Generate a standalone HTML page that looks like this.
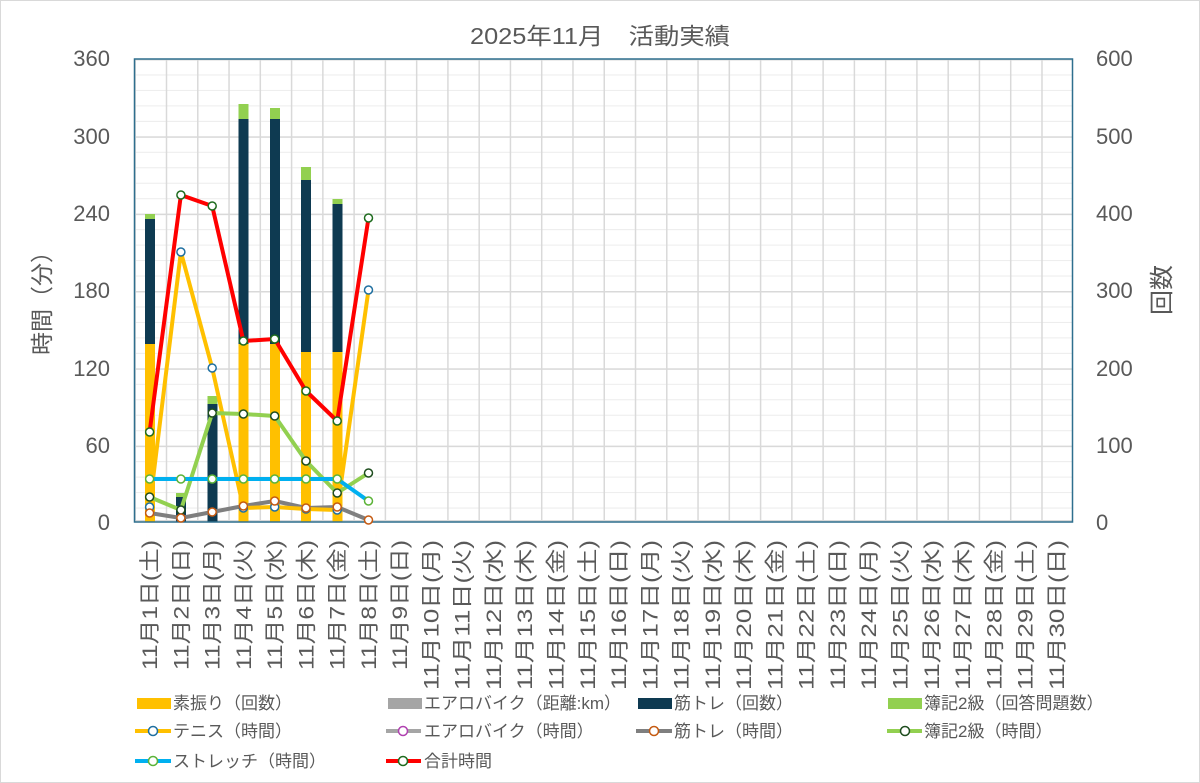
<!DOCTYPE html>
<html><head><meta charset="utf-8">
<style>
html,body{margin:0;padding:0;background:#fff;}
svg{display:block;}
text{font-family:"Liberation Sans","Noto Sans CJK JP",sans-serif;fill:#595959;}
</style></head>
<body>
<svg width="1200" height="783" viewBox="0 0 1200 783" xmlns="http://www.w3.org/2000/svg">
<defs>
<pattern id="minor" x="134.5" y="59" width="938" height="15.467" patternUnits="userSpaceOnUse">
<line x1="0" y1="0.5" x2="938" y2="0.5" stroke="#ececec" stroke-width="1"/>
</pattern>
<pattern id="major" x="134.5" y="59" width="938" height="77.333" patternUnits="userSpaceOnUse">
<line x1="0" y1="0.5" x2="938" y2="0.5" stroke="#d9d9d9" stroke-width="2"/>
</pattern>
<pattern id="vert" x="134.5" y="59" width="31.267" height="463" patternUnits="userSpaceOnUse">
<line x1="0.5" y1="0" x2="0.5" y2="463" stroke="#d9d9d9" stroke-width="2"/>
</pattern>
</defs>
<rect x="0.5" y="0.5" width="1199" height="782" fill="#fff" stroke="#d9d9d9"/>
<text x="470" y="44" font-size="23" textLength="260" lengthAdjust="spacingAndGlyphs">2025年11月　活動実績</text>

<rect x="134.5" y="59" width="938" height="463" fill="url(#minor)"/>
<rect x="134.5" y="59" width="938" height="463" fill="url(#major)"/>
<rect x="134.5" y="59" width="938" height="463" fill="url(#vert)"/>
<line x1="134.5" y1="521" x2="1072" y2="521" stroke="#d9d9d9" stroke-width="2"/>

<g>
<rect x="145" y="344" width="10" height="178" fill="#ffc000"/>
<rect x="145" y="219" width="10" height="125" fill="#0e3a51"/>
<rect x="145" y="214" width="10" height="5" fill="#92d050"/>
<rect x="176" y="497" width="10" height="25" fill="#0e3a51"/>
<rect x="176" y="493" width="10" height="4" fill="#92d050"/>
<rect x="207.5" y="404" width="10" height="118" fill="#0e3a51"/>
<rect x="207.5" y="396" width="10" height="8" fill="#92d050"/>
<rect x="238.5" y="344" width="10" height="178" fill="#ffc000"/>
<rect x="238.5" y="119" width="10" height="225" fill="#0e3a51"/>
<rect x="238.5" y="104" width="10" height="15" fill="#92d050"/>
<rect x="270" y="344" width="10" height="178" fill="#ffc000"/>
<rect x="270" y="119" width="10" height="225" fill="#0e3a51"/>
<rect x="270" y="108" width="10" height="11" fill="#92d050"/>
<rect x="301" y="352" width="10" height="170" fill="#ffc000"/>
<rect x="301" y="180" width="10" height="172" fill="#0e3a51"/>
<rect x="301" y="167" width="10" height="13" fill="#92d050"/>
<rect x="332.5" y="352" width="10" height="170" fill="#ffc000"/>
<rect x="332.5" y="204" width="10" height="148" fill="#0e3a51"/>
<rect x="332.5" y="199" width="10" height="5" fill="#92d050"/>
</g>

<rect x="134.5" y="59" width="938" height="463" fill="none" stroke="#2e6f8e" stroke-width="1.5"/>

<g fill="none" stroke-width="4" stroke-linejoin="round">
<polyline stroke="#7f7f7f" points="149.6,513 180.9,518 212.2,512 243.4,506 274.7,501 306,508 337.2,507 368.5,520"/>
<polyline stroke="#ffc000" points="149.6,507 180.9,252 212.2,368 243.4,508 274.7,507 306,509 337.2,510 368.5,290"/>
<polyline stroke="#92d050" points="149.6,497 180.9,510 212.2,413 243.4,414 274.7,416 306,461 337.2,493 368.5,473"/>
<polyline stroke="#00b0f0" points="149.6,479 180.9,479 212.2,479 243.4,479 274.7,479 306,479 337.2,479 368.5,501"/>
<polyline stroke="#ff0000" points="149.6,432 180.9,195 212.2,206 243.4,341 274.7,339 306,391 337.2,421 368.5,218"/>
</g>
<g fill="#fff" stroke-width="1.5">
<g stroke="#1f6fa0"><circle cx="149.6" cy="507" r="4"/><circle cx="180.9" cy="252" r="4"/><circle cx="212.2" cy="368" r="4"/><circle cx="243.4" cy="508" r="4"/><circle cx="274.7" cy="507" r="4"/><circle cx="306" cy="509" r="4"/><circle cx="337.2" cy="510" r="4"/><circle cx="368.5" cy="290" r="4"/></g>
<g stroke="#1e4d1e"><circle cx="149.6" cy="497" r="4"/><circle cx="180.9" cy="510" r="4"/><circle cx="212.2" cy="413" r="4"/><circle cx="243.4" cy="414" r="4"/><circle cx="274.7" cy="416" r="4"/><circle cx="306" cy="461" r="4"/><circle cx="337.2" cy="493" r="4"/><circle cx="368.5" cy="473" r="4"/></g>
<g stroke="#5cb338"><circle cx="149.6" cy="479" r="4"/><circle cx="180.9" cy="479" r="4"/><circle cx="212.2" cy="479" r="4"/><circle cx="243.4" cy="479" r="4"/><circle cx="274.7" cy="479" r="4"/><circle cx="306" cy="479" r="4"/><circle cx="337.2" cy="479" r="4"/><circle cx="368.5" cy="501" r="4"/></g>
<g stroke="#c55a11"><circle cx="149.6" cy="513" r="4"/><circle cx="180.9" cy="518" r="4"/><circle cx="212.2" cy="512" r="4"/><circle cx="243.4" cy="506" r="4"/><circle cx="274.7" cy="501" r="4"/><circle cx="306" cy="508" r="4"/><circle cx="337.2" cy="507" r="4"/><circle cx="368.5" cy="520" r="4"/></g>
<g stroke="#1e6b1e"><circle cx="149.6" cy="432" r="4"/><circle cx="180.9" cy="195" r="4"/><circle cx="212.2" cy="206" r="4"/><circle cx="243.4" cy="341" r="4"/><circle cx="274.7" cy="339" r="4"/><circle cx="306" cy="391" r="4"/><circle cx="337.2" cy="421" r="4"/><circle cx="368.5" cy="218" r="4"/></g>
</g>

<g font-size="22" text-anchor="end">
<text x="110" y="66">360</text><text x="110" y="144">300</text><text x="110" y="221">240</text>
<text x="110" y="298">180</text><text x="110" y="376">120</text><text x="110" y="453">60</text><text x="110" y="530">0</text>
</g>
<g font-size="22" text-anchor="start">
<text x="1096" y="66">600</text><text x="1096" y="144">500</text><text x="1096" y="221">400</text>
<text x="1096" y="298">300</text><text x="1096" y="376">200</text><text x="1096" y="453">100</text><text x="1096" y="530">0</text>
</g>
<text transform="translate(50,355) rotate(-90)" font-size="23" textLength="115" lengthAdjust="spacingAndGlyphs">時間（分）</text>
<text transform="translate(1170,315) rotate(-90)" font-size="24" textLength="50" lengthAdjust="spacingAndGlyphs">回数</text>

<g font-size="21" text-anchor="end" lengthAdjust="spacingAndGlyphs">
<text transform="translate(157,540) rotate(-90)" textLength="130" lengthAdjust="spacingAndGlyphs">11月1日(土)</text>
<text transform="translate(188.3,540) rotate(-90)" textLength="130" lengthAdjust="spacingAndGlyphs">11月2日(日)</text>
<text transform="translate(219.6,540) rotate(-90)" textLength="130" lengthAdjust="spacingAndGlyphs">11月3日(月)</text>
<text transform="translate(250.8,540) rotate(-90)" textLength="130" lengthAdjust="spacingAndGlyphs">11月4日(火)</text>
<text transform="translate(282.1,540) rotate(-90)" textLength="130" lengthAdjust="spacingAndGlyphs">11月5日(水)</text>
<text transform="translate(313.4,540) rotate(-90)" textLength="130" lengthAdjust="spacingAndGlyphs">11月6日(木)</text>
<text transform="translate(344.6,540) rotate(-90)" textLength="130" lengthAdjust="spacingAndGlyphs">11月7日(金)</text>
<text transform="translate(375.9,540) rotate(-90)" textLength="130" lengthAdjust="spacingAndGlyphs">11月8日(土)</text>
<text transform="translate(407.2,540) rotate(-90)" textLength="130" lengthAdjust="spacingAndGlyphs">11月9日(日)</text>
<text transform="translate(438.4,540) rotate(-90)" textLength="150" lengthAdjust="spacingAndGlyphs">11月10日(月)</text>
<text transform="translate(469.7,540) rotate(-90)" textLength="150" lengthAdjust="spacingAndGlyphs">11月11日(火)</text>
<text transform="translate(501,540) rotate(-90)" textLength="150" lengthAdjust="spacingAndGlyphs">11月12日(水)</text>
<text transform="translate(532.2,540) rotate(-90)" textLength="150" lengthAdjust="spacingAndGlyphs">11月13日(木)</text>
<text transform="translate(563.5,540) rotate(-90)" textLength="150" lengthAdjust="spacingAndGlyphs">11月14日(金)</text>
<text transform="translate(594.8,540) rotate(-90)" textLength="150" lengthAdjust="spacingAndGlyphs">11月15日(土)</text>
<text transform="translate(626.1,540) rotate(-90)" textLength="150" lengthAdjust="spacingAndGlyphs">11月16日(日)</text>
<text transform="translate(657.3,540) rotate(-90)" textLength="150" lengthAdjust="spacingAndGlyphs">11月17日(月)</text>
<text transform="translate(688.6,540) rotate(-90)" textLength="150" lengthAdjust="spacingAndGlyphs">11月18日(火)</text>
<text transform="translate(719.9,540) rotate(-90)" textLength="150" lengthAdjust="spacingAndGlyphs">11月19日(水)</text>
<text transform="translate(751.1,540) rotate(-90)" textLength="150" lengthAdjust="spacingAndGlyphs">11月20日(木)</text>
<text transform="translate(782.4,540) rotate(-90)" textLength="150" lengthAdjust="spacingAndGlyphs">11月21日(金)</text>
<text transform="translate(813.7,540) rotate(-90)" textLength="150" lengthAdjust="spacingAndGlyphs">11月22日(土)</text>
<text transform="translate(844.9,540) rotate(-90)" textLength="150" lengthAdjust="spacingAndGlyphs">11月23日(日)</text>
<text transform="translate(876.2,540) rotate(-90)" textLength="150" lengthAdjust="spacingAndGlyphs">11月24日(月)</text>
<text transform="translate(907.5,540) rotate(-90)" textLength="150" lengthAdjust="spacingAndGlyphs">11月25日(火)</text>
<text transform="translate(938.8,540) rotate(-90)" textLength="150" lengthAdjust="spacingAndGlyphs">11月26日(水)</text>
<text transform="translate(970,540) rotate(-90)" textLength="150" lengthAdjust="spacingAndGlyphs">11月27日(木)</text>
<text transform="translate(1001.3,540) rotate(-90)" textLength="150" lengthAdjust="spacingAndGlyphs">11月28日(金)</text>
<text transform="translate(1032.6,540) rotate(-90)" textLength="150" lengthAdjust="spacingAndGlyphs">11月29日(土)</text>
<text transform="translate(1063.8,540) rotate(-90)" textLength="150" lengthAdjust="spacingAndGlyphs">11月30日(日)</text>
</g>

<g font-size="17">
<rect x="137" y="698" width="34" height="11" fill="#ffc000"/><text x="173" y="709">素振り（回数）</text>
<rect x="388" y="698" width="34" height="11" fill="#a5a5a5"/><text x="424" y="709">エアロバイク（距離:km）</text>
<rect x="638" y="698" width="34" height="11" fill="#0e3a51"/><text x="674" y="709">筋トレ（回数）</text>
<rect x="888" y="698" width="34" height="11" fill="#92d050"/><text x="924" y="709">簿記2級（回答問題数）</text>

<line x1="135" y1="731" x2="171" y2="731" stroke="#ffc000" stroke-width="4"/><circle cx="153" cy="731" r="4.5" fill="#fff" stroke="#1f6fa0" stroke-width="1.5"/><text x="173" y="737">テニス（時間）</text>
<line x1="386" y1="731" x2="421" y2="731" stroke="#a5a5a5" stroke-width="4"/><circle cx="403" cy="731" r="4.5" fill="#fff" stroke="#b040b0" stroke-width="1.5"/><text x="424" y="737">エアロバイク（時間）</text>
<line x1="636" y1="731" x2="672" y2="731" stroke="#7f7f7f" stroke-width="4"/><circle cx="654" cy="731" r="4.5" fill="#fff" stroke="#c55a11" stroke-width="1.5"/><text x="674" y="737">筋トレ（時間）</text>
<line x1="887" y1="731" x2="922" y2="731" stroke="#92d050" stroke-width="4"/><circle cx="905" cy="731" r="4.5" fill="#fff" stroke="#1e4d1e" stroke-width="1.5"/><text x="924" y="737">簿記2級（時間）</text>

<line x1="135" y1="761" x2="171" y2="761" stroke="#00b0f0" stroke-width="4"/><circle cx="153" cy="761" r="4.5" fill="#fff" stroke="#5cb338" stroke-width="1.5"/><text x="173" y="767">ストレッチ（時間）</text>
<line x1="386" y1="761" x2="421" y2="761" stroke="#ff0000" stroke-width="4"/><circle cx="403" cy="761" r="4.5" fill="#fff" stroke="#1e6b1e" stroke-width="1.5"/><text x="424" y="767">合計時間</text>
</g>
</svg>
</body></html>
